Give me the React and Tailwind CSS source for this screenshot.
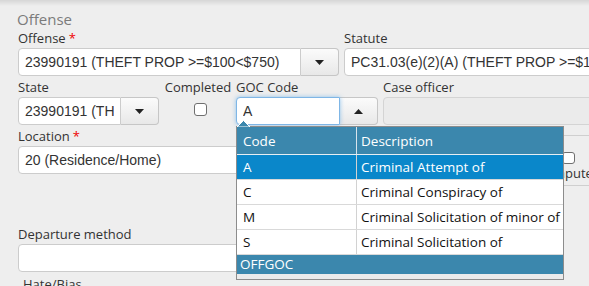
import React from "react";

const label = "block h-[17px] leading-[17px] text-[13px] text-[#333]";

const Caret = ({ up }) => (
  <svg width="9" height="5" viewBox="0 0 9 5">
    <polygon points={up ? "0,5 9,5 4.5,0" : "0,0 9,0 4.5,5"} fill="#222" />
  </svg>
);

const Combo = ({ value, width, focus, up }) => (
  <div className={`flex h-[28px] mt-px ${width}`}>
    <div
      className={`flex-1 min-w-0 flex items-center px-[6px] bg-white border rounded-l-[4px] font-['Liberation_Sans',Arial,sans-serif] text-[14px] text-[#333] ${
        focus
          ? "border-[#7fb6e6] shadow-[0_0_4px_rgba(102,175,233,0.7)] relative z-10"
          : "border-[#cccccc]"
      }`}
    >
      <span className="block w-full overflow-hidden whitespace-nowrap">{value}</span>
    </div>
    <button className="w-[38px] flex items-center justify-center border border-l-0 border-[#c6c6c6] rounded-r-[4px] bg-[linear-gradient(#fbfbfb,#e8e8e8)]">
      <Caret up={up} />
    </button>
  </div>
);

const Input = ({ value = "", className = "" }) => (
  <div
    className={`h-[28px] mt-px flex items-center px-[6px] border rounded-[4px] overflow-hidden whitespace-nowrap font-['Liberation_Sans',Arial,sans-serif] text-[14px] text-[#333] ${className}`}
  >
    {value}
  </div>
);

const Req = () => <span className="text-[#e00] ml-[3px]">*</span>;

const rows = [
  ["A", "Criminal Attempt of"],
  ["C", "Criminal Conspiracy of"],
  ["M", "Criminal Solicitation of minor of"],
  ["S", "Criminal Solicitation of"],
];

export default function App() {
  return (
    <div className="relative w-[589px] h-[286px] overflow-hidden bg-[linear-gradient(#d6d6d6,#eeeeee_6px)] font-['Open_Sans',sans-serif]">
      <div className="pl-[18px] pt-[8px] w-[1000px]">
        <h2 className="h-[22px] leading-[22px] text-[15px] text-[#7b7b7b] -ml-px">Offense</h2>

        {/* row 1 */}
        <div className="flex gap-[5px]">
          <div>
            <span className={label}>
              Offense
              <Req />
            </span>
            <Combo width="w-[321px]" value="23990191 (THEFT PROP >=$100<$750)" />
          </div>
          <div className="w-[320px]">
            <span className={label}>Statute</span>
            <Input
              className="bg-white border-[#cccccc]"
              value="PC31.03(e)(2)(A) (THEFT PROP >=$100<$750)"
            />
          </div>
        </div>

        {/* row 2 */}
        <div className="flex mt-[3px]">
          <div>
            <span className={label}>State</span>
            <Combo width="w-[141px]" value="23990191 (THEFT PROP)" />
          </div>
          <div className="w-[68px] ml-[5px] flex flex-col items-center">
            <span className={label}>Completed</span>
            <div className="mt-[7px] ml-[4px] w-[13px] h-[13px] bg-white border border-[#6f6f6f] rounded-[3px]" />
          </div>
          <div className="ml-[4px]">
            <span className={label}>GOC Code</span>
            <Combo width="w-[142px]" value="A" focus up />
          </div>
          <div className="ml-[5px] w-[260px]">
            <span className={label}>Case officer</span>
            <Input className="bg-[#ebebeb] border-[#d4d4d4]" />
          </div>
        </div>

        {/* row 3 */}
        <div className="flex items-start h-[46px] mt-[3px]">
          <div className="w-[520px]">
            <span className={label}>
              Location
              <Req />
            </span>
            <Input className="bg-white border-[#cccccc]" value="20 (Residence/Home)" />
          </div>
          <div className="ml-[10px] mt-[7px] w-[100px] h-[51px] shrink-0 border-y border-[#cfcfcf] flex flex-col items-start pt-[16px]">
            <div className="ml-[14px] w-[13px] h-[12px] bg-white border border-[#6f6f6f] rounded-[3px]" />
            <span className="ml-[-11px] mt-[1px] text-[13px] leading-[17px] text-[#333]">Computer</span>
          </div>
        </div>

        {/* departure */}
        <div className="mt-[52px] w-[520px]">
          <span className={label}>Departure method</span>
          <Input className="bg-white border-[#cccccc]" />
        </div>

        <span className={`${label} mt-[4px] pl-[5px]`}>Hate/Bias</span>
      </div>

      {/* dropdown popup */}
      <svg className="absolute left-[237px] top-[120px] z-20" width="13" height="7" viewBox="0 0 13 7">
        <polygon points="0,7 6.5,0.5 13,7" fill="#3b87ad" stroke="#ffffff" strokeWidth="1" />
      </svg>
      <div className="absolute left-[236px] top-[126px] w-[328px] h-[154px] border border-[#8c8c8c] bg-[#ebebeb] z-10 text-[13.5px]">
        <div className="flex h-[28px] bg-[#3b87ad] text-white border-b border-[#e6eef3]">
          <div className="w-[120px] pl-[6px] leading-[28px] border-r border-[#d8e4ec]">Code</div>
          <div className="flex-1 pl-[4px] leading-[28px]">Description</div>
        </div>
        {rows.map(([code, desc], i) => (
          <div
            key={code}
            className={`flex h-[25px] border-b border-[#d9d9d9] ${
              i === 0 ? "bg-[#0a87ca] text-white" : "bg-white text-[#111]"
            }`}
          >
            <div className="w-[120px] pl-[6px] leading-[24px] border-r border-[#d2d2d2]">{code}</div>
            <div className="flex-1 pl-[4px] leading-[24px]">{desc}</div>
          </div>
        ))}
        <div className="h-[19px] bg-[#3b87ad] text-white pl-[3px] leading-[19px]">OFFGOC</div>
      </div>
    </div>
  );
}
